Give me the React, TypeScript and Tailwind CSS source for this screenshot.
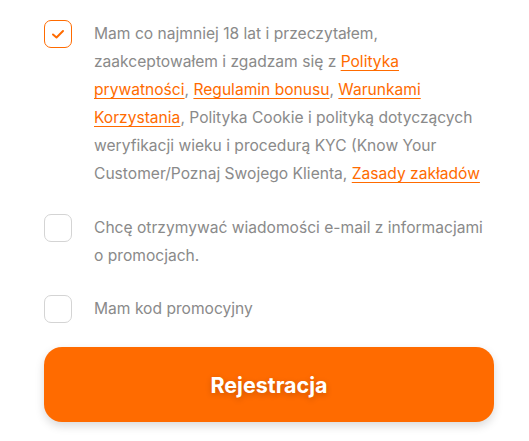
import React from "react";

function Check({ checked }: { checked?: boolean }) {
  return (
    <div
      className={
        "w-[28px] h-[28px] shrink-0 rounded-[7px] border flex items-center justify-center bg-white " +
        (checked ? "border-[#ff6b00]" : "border-[#d4d4d4]")
      }
    >
      {checked && (
        <svg width="14" height="14" viewBox="0 0 14 14" fill="none">
          <path d="M2 7.5 L5.5 10.5 L12 4" stroke="#ff6b00" strokeWidth="2" strokeLinecap="round" strokeLinejoin="round" />
        </svg>
      )}
    </div>
  );
}

const L = ({ children }: { children: React.ReactNode }) => (
  <a className="text-[#ff6b00] underline underline-offset-[3px] decoration-1">{children}</a>
);

export default function App() {
  return (
    <div className="w-[529px] h-[441px] bg-white font-['Inter',sans-serif] text-[15.6px] leading-[28px] text-[#8a8a8a]">
      <div className="pl-[44px] pr-[35px] pt-[20px] flex flex-col">
        <div className="flex gap-[22px]">
          <Check checked />
          <p>
            Mam co najmniej 18 lat i przeczytałem, zaakceptowałem i zgadzam się z <L>Polityka prywatności</L>,{" "}
            <L>Regulamin bonusu</L>, <L>Warunkami Korzystania</L>, Polityka Cookie i polityką dotyczących weryfikacji
            wieku i procedurą KYC (Know Your Customer/Poznaj Swojego Klienta, <L>Zasady zakładów</L>
          </p>
        </div>
        <div className="flex gap-[22px] mt-[26px]">
          <Check />
          <p>Chcę otrzymywać wiadomości e-mail z informacjami o promocjach.</p>
        </div>
        <div className="flex gap-[22px] mt-[25px]">
          <Check />
          <p>Mam kod promocyjny</p>
        </div>
        <button className="mt-[24px] w-[450px] h-[75px] rounded-[18px] bg-[#ff6b00] text-white font-bold text-[21.5px] shadow-[0_4px_10px_rgba(0,0,0,0.15)] [text-shadow:0_2px_6px_rgba(0,0,0,0.2)]">
          Rejestracja
        </button>
      </div>
    </div>
  );
}
